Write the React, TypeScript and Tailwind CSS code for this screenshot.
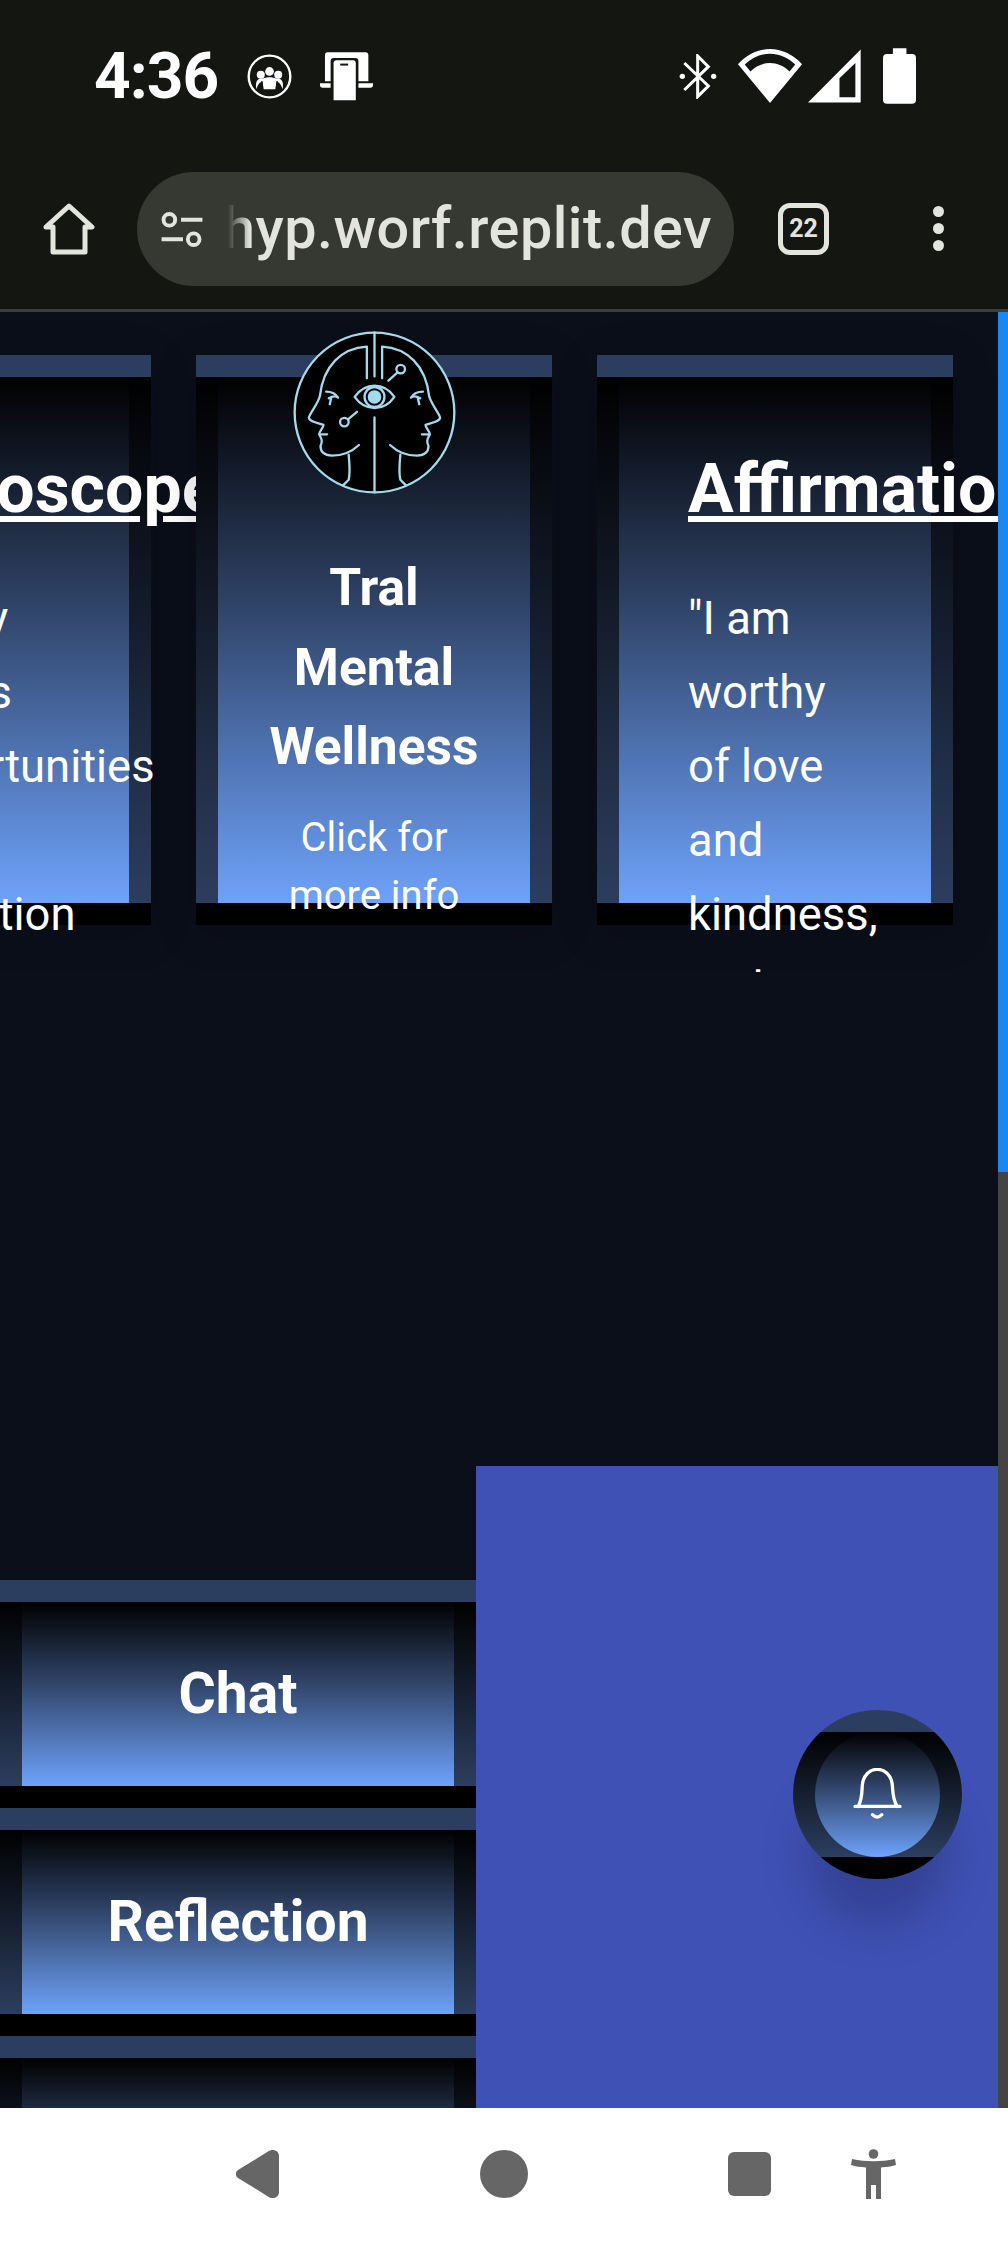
import type { ReactNode } from "react";

const inner = "bg-linear-to-b/srgb from-black via-[#2c3e5f] via-40% to-[#6ea2fa]";

function Bevel({ className, children }: { className: string; children: ReactNode }) {
  return (
    <div className={`relative isolate shrink-0 flex flex-col ${className}`}>
      <div className="h-[22px] shrink-0 bg-[#2c3e5f]" />
      <div className="relative z-10 flex-1 min-h-0 flex px-[22px] bg-linear-to-b/srgb from-black to-[#2c3e5f]">{children}</div>
      <div className="h-[22px] shrink-0 bg-black" />
    </div>
  );
}

function TextCard({ title, body }: { title: string; body: string }) {
  return (
    <Bevel className="w-[356px] h-[570px] shadow-[0_8px_40px_rgba(0,0,0,0.2)]">
      <div className={`flex-1 min-w-0 px-[69px] pt-[65px] text-white ${inner}`}>
        <h2 className="text-[68px] leading-[94px] font-bold underline whitespace-nowrap">{title}</h2>
        <p className="mt-[46px] text-[45.4px] leading-[74px]">{body}</p>
      </div>
    </Bevel>
  );
}

function LogoCard() {
  return (
    <Bevel className="w-[356px] h-[570px] shadow-[0_8px_40px_rgba(0,0,0,0.2)]">
      <div className={`flex-1 min-w-0 flex flex-col items-center text-white text-center ${inner}`}>
        <svg
          viewBox="96 58 494 498"
          className="w-[165px] h-[165px] shrink-0 -mt-[47px]"
          fill="none"
          stroke="#a3daee"
          strokeWidth="7"
          strokeLinecap="round"
          strokeLinejoin="round"
        >
          <circle cx="343" cy="307" r="241" fill="#000" />
          <path d="M343 65V198M343 322V548" />
          <path d="M320 204V108C245 112 188 165 178 258C170 285 150 305 145 322C146 335 170 338 189 344C189 355 176 362 176 373H200M176 373C182 385 188 392 180 408C180 425 190 436 215 437C245 437 275 425 296 405" />
          <path d="M366 204V108C441 112 498 165 508 258C516 285 536 305 541 322C540 335 516 338 497 344C497 355 510 362 510 373H486M510 373C504 385 498 392 506 408C506 425 496 436 471 437C441 437 411 425 390 405" />
          <path d="M265 434C268 465 270 490 265 510L248 527M421 434C418 465 416 490 421 510L438 527" />
          <path d="M197 244C210 244 225 250 233 262M205 264C215 258 225 256 233 262M212 264L208 282" />
          <path d="M489 244C476 244 461 250 453 262M481 264C471 258 461 256 453 262M474 264L478 282" />
          <path d="M283 260C315 215 372 215 403 260C372 305 315 305 283 260Z" />
          <circle cx="343" cy="260" r="30" />
          <circle cx="343" cy="260" r="17" fill="#a3daee" />
          <path d="M290 305L263 328" />
          <circle cx="252" cy="336" r="13" />
          <path d="M385 211L412 187" />
          <circle cx="422" cy="176" r="13" />
        </svg>
        <h2 className="mt-[53px] text-[51.5px] leading-[79.5px] font-bold px-[30px]">Tral Mental Wellness</h2>
        <p className="mt-[22px] text-[40px] leading-[58px] px-[50px]">Click for more info</p>
      </div>
    </Bevel>
  );
}

function MenuButton({ label }: { label: string }) {
  return (
    <Bevel className="w-[476px] h-[228px]">
      <div className={`flex-1 flex items-center justify-center text-white text-[57px] font-bold ${inner}`}>
        {label}
      </div>
    </Bevel>
  );
}

function StatusBar() {
  return (
    <div className="h-[172px] shrink-0 relative">
      <div className="flex items-center pt-[47px] pl-[94px] pr-[92px]">
        <span className="w-[126px] pt-[2px] text-[64px] leading-[56px] font-bold text-white font-['Roboto',sans-serif] tracking-[-1px]">
          4:36
        </span>
        {/* people in a ring */}
        <svg viewBox="562 103 134 134" className="ml-[27px] w-[45px] h-[45px]" fill="#fff">
          <circle cx="629" cy="170" r="62" fill="none" stroke="#fff" strokeWidth="7" />
          <circle cx="629" cy="155" r="13" />
          <circle cx="603" cy="165" r="12" />
          <circle cx="655" cy="165" r="12" />
          <path d="M590 208C586 188 592 176 604 176C612 176 616 172 629 172C642 172 646 176 654 176C666 176 672 188 668 208C664 196 660 188 650 186L648 208H610L608 186C598 188 594 196 590 208Z" />
          <path d="M606 184L610 210M652 184L648 210" fill="none" stroke="#141612" strokeWidth="4" />
        </svg>
        {/* phone on laptop */}
        <svg viewBox="780 103 160 146" className="ml-[28px] w-[53px] h-[49px]">
          <path d="M803 103H917Q926 103 926 112V190H896V130Q896 120 886 120H822Q812 120 812 130V190H795V112Q795 103 803 103Z" fill="#fff" />
          <path d="M780 196H812V210H788Q780 210 780 202ZM896 196H940V202Q940 210 932 210H896Z" fill="#fff" />
          <path d="M821 136Q821 127 830 127H880Q888 127 888 136V248H821Z" fill="#fff" />
          <rect x="841" y="137" width="24" height="6" fill="#141612" />
        </svg>
        <div className="flex-1" />
        {/* bluetooth */}
        <svg viewBox="88 100 112 135" className="w-[38px] h-[45px]" fill="none" stroke="#fff" strokeWidth="9">
          <path d="M103 208L175 138L143 106V228L175 196L103 127" />
          <circle cx="97" cy="167" r="8" fill="#fff" stroke="none" />
          <circle cx="191" cy="167" r="8" fill="#fff" stroke="none" />
        </svg>
        {/* wifi */}
        <svg viewBox="265 85 190 160" className="ml-[21px] w-[64px] h-[54px]">
          <path fillRule="evenodd" fill="#fff" d="M265 130C320 70 400 70 455 130L360 245ZM285 131L302 152C335 118 385 118 418 152L435 131C390 88 330 88 285 131Z" />
        </svg>
        {/* signal */}
        <svg viewBox="473 85 160 160" className="ml-[6px] w-[53px] h-[54px]">
          <path fillRule="evenodd" fill="#fff" d="M473 245L632 85V245ZM568 229H616V126L568 172Z" />
        </svg>
        {/* battery */}
        <svg viewBox="698 82 100 168" className="ml-[22px] w-[33px] h-[56px]" fill="#fff">
          <path d="M728 82H769V99H786Q798 99 798 111V238Q798 250 786 250H710Q698 250 698 238V111Q698 99 710 99H728Z" />
        </svg>
      </div>
    </div>
  );
}

function Toolbar() {
  return (
    <div className="flex-1 flex items-start pl-[43px]">
      <svg viewBox="0 0 52 52" className="mt-[31px] w-[52px] h-[52px]" fill="none" stroke="#e3e5dd" strokeWidth="5" strokeLinejoin="round">
        <path d="M26 3L49 24H42V49H10V24H3Z" />
      </svg>
      <div className="ml-[42px] w-[597px] h-[114px] rounded-full bg-[#363832] flex items-center pl-[24px] pr-[22px]">
        <svg viewBox="0 0 42 36" className="w-[42px] h-[35px] shrink-0" fill="none" stroke="#e3e5dd" strokeWidth="4">
          <circle cx="8" cy="8" r="6" />
          <path d="M20 8H42M0 28H22" />
          <circle cx="33" cy="28" r="6" />
        </svg>
        <div className="relative ml-[25px] flex-1 min-w-0 flex justify-end overflow-hidden">
          <span className="text-[57.5px] leading-[72px] font-medium tracking-[0.5px] text-[#e3e5dd] whitespace-nowrap font-['Roboto',sans-serif]">
            hyp.worf.replit.dev
          </span>
          <div className="absolute inset-y-0 left-0 w-[22px] bg-linear-to-r from-[#363832] to-transparent" />
        </div>
      </div>
      <div className="ml-[44px] mt-[31px] w-[51px] h-[52px] rounded-[12px] border-[5px] border-[#e3e5dd] flex items-center justify-center text-[25px] font-bold text-[#e3e5dd] font-['Roboto',sans-serif]">
        22
      </div>
      <div className="ml-[104px] mt-[34px] flex flex-col gap-[6px]">
        <div className="w-[11px] h-[11px] rounded-full bg-[#e3e5dd]" />
        <div className="w-[11px] h-[11px] rounded-full bg-[#e3e5dd]" />
        <div className="w-[11px] h-[11px] rounded-full bg-[#e3e5dd]" />
      </div>
    </div>
  );
}

function NavBar() {
  return (
    <div className="h-[136px] shrink-0 bg-white flex items-center pb-[4px]">
      <svg viewBox="0 0 43 48" className="ml-[236px] w-[43px] h-[48px]" fill="#666">
        <path d="M32 1.5C36 -1.5 43 0 43 6V42C43 48 36 49.5 32 46.5L2 28C-1 26 -1 22 2 20Z" />
      </svg>
      <div className="ml-[201px] w-[48px] h-[48px] rounded-full bg-[#666]" />
      <div className="ml-[200px] w-[43px] h-[44px] rounded-[6px] bg-[#666]" />
      <svg viewBox="0 0 45 50" className="ml-[80px] w-[45px] h-[50px]" fill="#666">
        <circle cx="22.5" cy="5" r="4.8" />
        <path d="M1 10C15 13 30 13 44 10L45 16C40 17.5 36 18 30 18.5V50H25V36H20V50H15V18.5C9 18 5 17.5 0 16Z" />
      </svg>
    </div>
  );
}

export default function App() {
  return (
    <div className="w-[1008px] h-[2244px] overflow-hidden flex flex-col font-['Roboto',sans-serif] bg-[#0b0f1a]">
      <header className="h-[312px] shrink-0 flex flex-col bg-[#141612] border-b-[3px] border-[#3c3e39]">
        <StatusBar />
        <Toolbar />
      </header>

      <div className="flex-1 min-h-0 flex">
        <main className="flex-1 min-w-0 flex flex-col">
          <div className="h-[660px] shrink-0 overflow-hidden flex gap-[45px] pt-[43px] -ml-[205px]">
            <TextCard title="Horoscope" body="Today brings opportunities for reflection" />
            <LogoCard />
            <TextCard title="Affirmation" body={'"I am worthy of love and kindness, and'} />
          </div>

          <div className="flex-1 min-h-0 flex mt-[494px]">
            <div className="w-[476px] shrink-0 overflow-hidden flex flex-col pt-[114px]">
              <MenuButton label="Chat" />
              <MenuButton label="Reflection" />
              <MenuButton label="Journal" />
            </div>
            <div className="flex-1 bg-[#3f51b5] flex justify-end items-start pt-[244px] pr-[36px]">
              <div className="rounded-full shadow-[0_60px_50px_-15px_rgba(0,0,0,0.2)]">
                <Bevel className="w-[169px] h-[169px] rounded-full overflow-hidden">
                  <div className={`flex-1 rounded-full flex items-center justify-center ${inner}`}>
                    <svg viewBox="280 264 146 160" className="w-[49px] h-[53px]" fill="none" stroke="#fff" strokeWidth="10" strokeLinecap="round" strokeLinejoin="round">
                      <path d="M285 380H421M295 380C310 350 305 320 308 310C312 285 330 268 352 268C375 268 393 285 397 310C400 330 397 355 412 380M338 405Q352 420 366 405" />
                    </svg>
                  </div>
                </Bevel>
              </div>
            </div>
          </div>
        </main>

        <div className="w-[10px] shrink-0 bg-[#444444] flex flex-col">
          <div className="h-[860px] bg-[#1a87f2]" />
        </div>
      </div>

      <NavBar />
    </div>
  );
}
